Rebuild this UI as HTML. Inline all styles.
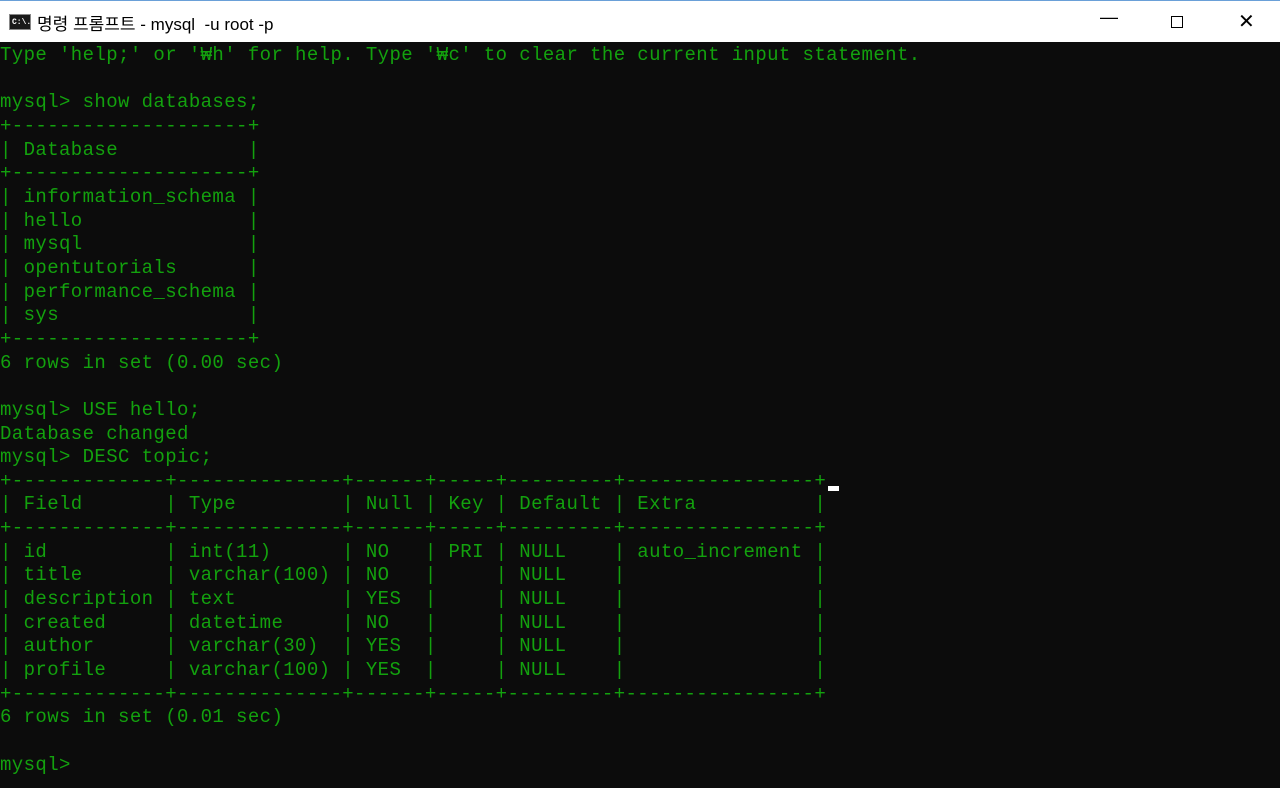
<!DOCTYPE html>
<html><head><meta charset="utf-8"><style>
html,body{margin:0;padding:0;width:1280px;height:788px;overflow:hidden;background:#0c0c0c}
.tb{position:absolute;left:0;top:0;width:1280px;height:42px;background:#fff;border-top:1px solid #6aa0d8;box-sizing:border-box}
.tt{position:absolute;left:37px;top:9px;font:17px "Liberation Sans","Noto Sans CJK KR",sans-serif;color:#000;white-space:pre}
.ic{position:absolute;left:9px;top:13px;width:22px;height:16px;background:#1a1a1a;border:1px solid #888;box-sizing:border-box}
.ic span{position:absolute;left:2px;top:3px;font:bold 8px "Liberation Mono",monospace;color:#fff}
.ctl{position:absolute;top:10px;font:18px "Liberation Sans",sans-serif;color:#000}
pre{position:absolute;left:0;top:44px;margin:0;font-family:"Liberation Mono","DejaVu Sans Mono",monospace;font-size:19px;letter-spacing:0.4px;line-height:23.65px;color:#13a10e;white-space:pre}
.cur{position:absolute;left:828px;top:486px;width:11px;height:5px;background:#fff}
</style></head><body>
<div class="tb"><div class="ic"><span>C:\.</span></div><div class="tt">명령 프롬프트 - mysql  -u root -p</div>
<div class="ctl" style="left:1100px;top:6px">—</div>
<div style="position:absolute;left:1171px;top:15px;width:10px;height:10px;border:1px solid #000"></div>
<div class="ctl" style="left:1238px;top:8px;font-size:20px">✕</div></div>
<pre>Type 'help;' or '₩h' for help. Type '₩c' to clear the current input statement.

mysql&gt; show databases;
+--------------------+
| Database           |
+--------------------+
| information_schema |
| hello              |
| mysql              |
| opentutorials      |
| performance_schema |
| sys                |
+--------------------+
6 rows in set (0.00 sec)

mysql&gt; USE hello;
Database changed
mysql&gt; DESC topic;
+-------------+--------------+------+-----+---------+----------------+
| Field       | Type         | Null | Key | Default | Extra          |
+-------------+--------------+------+-----+---------+----------------+
| id          | int(11)      | NO   | PRI | NULL    | auto_increment |
| title       | varchar(100) | NO   |     | NULL    |                |
| description | text         | YES  |     | NULL    |                |
| created     | datetime     | NO   |     | NULL    |                |
| author      | varchar(30)  | YES  |     | NULL    |                |
| profile     | varchar(100) | YES  |     | NULL    |                |
+-------------+--------------+------+-----+---------+----------------+
6 rows in set (0.01 sec)

mysql&gt;</pre>
<div class="cur"></div>
</body></html>
